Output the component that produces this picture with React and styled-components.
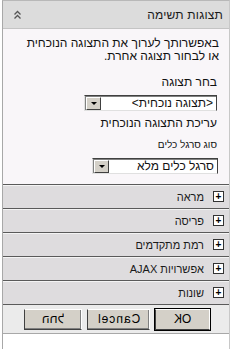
import React from "react";
import styled, { createGlobalStyle } from "styled-components";

const Global = createGlobalStyle`
  html, body { margin: 0; padding: 0; background: #ffffff; }
  body { font-family: "Liberation Sans", "DejaVu Sans", Arial, sans-serif; }
`;

const Panel = styled.div`
  direction: rtl;
  margin-left: 2px;
  width: 228px;
  border-left: 1px solid #a8a8a8;
  border-right: 1px solid #c8c8c8;
  border-top: 1px solid #b8b8b8;
  min-height: 349px;
  display: flex;
  flex-direction: column;
  box-sizing: border-box;
`;

const Header = styled.div`
  height: 27px;
  background: #dcdcdc;
  border-bottom: 1px solid #c4c4c4;
  display: flex;
  align-items: center;
  justify-content: space-between;
  padding: 0 6px 0 10px;
  font-size: 12px;
  letter-spacing: 0.2px;
  color: #1a1a1a;
`;

const Body = styled.div`
  background: #f9f6f9;
  padding: 8px 8px 10px 10px;
  font-size: 12px;
  color: #111;
`;

const Para = styled.div`
  line-height: 13px;
  padding-right: 2px;
`;

const Label = styled.div`
  font-size: ${p => (p.small ? "10px" : "12px")};
  line-height: 14px;
  margin-top: ${p => p.top}px;
  padding-right: 4px;
`;

const Select = styled.div`
  margin-top: ${p => p.top}px;
  margin-right: ${p => p.right}px;
  width: ${p => p.w}px;
  height: 16px;
  box-sizing: border-box;
  background: #fff;
  border-top: 1px solid #404040;
  border-right: 1px solid #404040;
  border-bottom: 1px solid #e0e0e0;
  border-left: 1px solid #e0e0e0;
  box-shadow: inset 1px 1px 0 #808080;
  display: flex;
  align-items: center;
  font-size: 12px;
`;

const SelText = styled.div`
  flex: 1;
  padding-right: 3px;
  line-height: 14px;
  white-space: nowrap;
`;

const DropBtn = styled.div`
  width: 15px;
  height: 13px;
  box-sizing: border-box;
  background: #d4d0c8;
  border-top: 1px solid #fff;
  border-left: 1px solid #fff;
  border-right: 1px solid #404040;
  border-bottom: 1px solid #404040;
  display: flex;
  align-items: center;
  justify-content: center;
  margin-left: 1px;
`;

const Arrow = styled.div`
  width: 0;
  height: 0;
  border-left: 3px solid transparent;
  border-right: 3px solid transparent;
  border-top: 3px solid #000;
`;

const Section = styled.div`
  height: 23px;
  background: #dedcde;
  border-top: 1px solid #5a5a5a;
  box-shadow: inset 0 1px 0 #f4f4f4;
  display: flex;
  align-items: center;
  padding-right: 5px;
  gap: 9px;
  font-size: 11px;
  color: #1a1a1a;
`;

const PlusBox = styled.div`
  width: 9px;
  height: 9px;
  border: 1px solid #333;
  background: #fff;
  display: flex;
  align-items: center;
  justify-content: center;
  font-size: 10px;
  line-height: 9px;
  font-weight: bold;
  color: #000;
`;

const Footer = styled.div`
  background: #ebebeb;
  border-top: 1px solid #5a5a5a;
  border-bottom: 1px solid #a8a8a8;
  height: 28px;
  display: flex;
  align-items: center;
  padding-right: 19px;
  gap: 5px;
`;

const Button = styled.div`
  width: ${p => p.w}px;
  height: 21px;
  box-sizing: border-box;
  background: #d4d0c8;
  border-top: 1px solid #fff;
  border-right: 1px solid #fff;
  border-left: 1px solid #404040;
  border-bottom: 1px solid #404040;
  box-shadow: ${p => (p.primary ? "0 0 0 1px #000" : "inset -1px -1px 0 #808080")};
  display: flex;
  align-items: center;
  justify-content: center;
  font-size: 12px;
  color: #000;
`;

const Mirror = styled.span`
  display: inline-block;
  transform: scaleX(-1);
  letter-spacing: ${p => p.ls || 0}px;
`;

const Chevron = () => (
  <svg width="9" height="10" viewBox="0 0 9 10">
    <path d="M1.5 4.5 L4.5 1.5 L7.5 4.5" fill="none" stroke="#555" strokeWidth="1.3" />
    <path d="M1.5 8.5 L4.5 5.5 L7.5 8.5" fill="none" stroke="#555" strokeWidth="1.3" />
  </svg>
);

const sections = ["מראה", "פריסה", "רמת מתקדמים", "אפשרויות AJAX", "שונות"];

export default function App() {
  return (
    <>
      <Global />
      <Panel>
        <Header>
          <span>תצוגות תשימה</span>
          <Chevron />
        </Header>
        <Body>
          <Para>
            באפשרותך לערוך את התצוגה הנוכחית
            <br />
            או לבחור תצוגה אחרת.
          </Para>
          <Label top={12}>בחר תצוגה</Label>
          <Select top={6} right={4} w={133}>
            <SelText>&lt;תצוגה נוכחית&gt;</SelText>
            <DropBtn><Arrow /></DropBtn>
          </Select>
          <Label top={5}>עריכת התצוגה הנוכחית</Label>
          <Label small top={8}>סוג סרגל כלים</Label>
          <Select top={6} right={3} w={126}>
            <SelText>סרגל כלים מלא</SelText>
            <DropBtn><Arrow /></DropBtn>
          </Select>
        </Body>
        {sections.map(s => (
          <Section key={s}>
            <PlusBox>+</PlusBox>
            <span>{s}</span>
          </Section>
        ))}
        <Footer>
          <Button w={55} primary><Mirror>OK</Mirror></Button>
          <Button w={63}><Mirror ls={1}>Cancel</Mirror></Button>
          <Button w={58}><Mirror>החל</Mirror></Button>
        </Footer>
      </Panel>
    </>
  );
}
